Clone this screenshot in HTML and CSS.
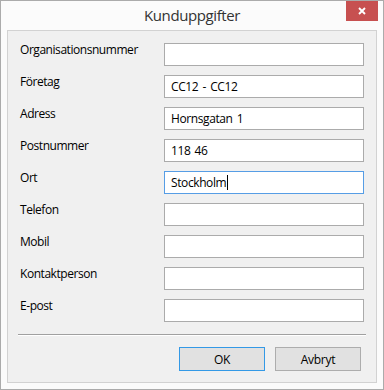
FILE: index.html
```html
<!DOCTYPE html>
<html lang="sv">
<head>
  <meta charset="UTF-8">
  <meta name="viewport" content="width=device-width, initial-scale=1">
  <title>Kunduppgifter</title>
  <link rel="stylesheet" href="styles.css">
</head>
<body>
<div class="window">
  <div class="titlebar">
    <span class="title">Kunduppgifter</span>
    <button class="close" type="button">
      <svg width="8" height="8" viewBox="0 0 8 8"><path d="M1 1 L7 7 M7 1 L1 7" stroke="#fff" stroke-width="1.9" fill="none"/></svg>
    </button>
  </div>

  <div class="client">
    <form class="fields">
      <label>Organisationsnummer</label>
      <input type="text" value="">
      <label>Företag</label>
      <input type="text" value="CC12 - CC12">
      <label>Adress</label>
      <input type="text" value="Hornsgatan 1">
      <label>Postnummer</label>
      <input type="text" value="118 46">
      <label>Ort</label>
      <div class="input focused">Stockholm<span class="caret"></span></div>
      <label>Telefon</label>
      <input type="text" value="">
      <label>Mobil</label>
      <input type="text" value="">
      <label>Kontaktperson</label>
      <input type="text" value="">
      <label>E-post</label>
      <input type="text" value="">
    </form>

    <div class="separator"></div>

    <div class="buttons">
      <button class="btn default" type="button">OK</button>
      <button class="btn" type="button">Avbryt</button>
    </div>
  </div>
</div>
</body>
</html>
```

FILE: styles.css
```css
* { box-sizing: border-box; }
body {
  margin: 0;
  background-color: #fff;
  font-family: 'Open Sans', 'Noto Sans', sans-serif;
  color: #000;
}

.window {
  width: 384px;
  height: 390px;
  border: 1px solid #ababab;
  background-color: #fbfbfb;
  display: flex;
  flex-direction: column;
}

.titlebar {
  position: relative;
  height: 29px;
  display: flex;
  align-items: center;
  justify-content: center;
}

.title {
  font-size: 15px;
  letter-spacing: -0.4px;
  color: #333;
  margin-top: -2px;
}

.close {
  position: absolute;
  top: 0;
  right: 5px;
  width: 32px;
  height: 20px;
  border: none;
  padding: 0;
  background-color: #c75050;
  display: flex;
  align-items: center;
  justify-content: center;
}

.client {
  margin: 0 6px 6px;
  flex: 1;
  border: 1px solid #d2d2d2;
  background-color: #f0f0f0;
  padding-top: 12px;
}

.fields {
  display: grid;
  grid-template-columns: 144px 200px;
  grid-auto-rows: 23px;
  row-gap: 9px;
  padding: 0 11px 0 12px;
  margin: 0;
}

.fields label {
  font-size: 12px;
  line-height: 16px;
  letter-spacing: -0.45px;
  margin-top: -1px;
}

.fields input,
.fields .input {
  height: 23px;
  border: 1px solid #ababab;
  background-color: #fff;
  font-family: inherit;
  font-size: 12px;
  letter-spacing: -0.4px;
  word-spacing: 1.5px;
  padding: 0 6px;
  margin: 0;
  outline: none;
  color: #000;
}

.fields .input {
  display: flex;
  align-items: center;
}

.fields .focused {
  border-color: #569de5;
}

.caret {
  display: inline-block;
  width: 1px;
  height: 15px;
  margin-left: 1px;
  background-color: #000;
}

.separator {
  margin: 12px 10px 0;
  height: 2px;
  border-top: 1px solid #a0a0a0;
  border-bottom: 1px solid #fff;
}

.buttons {
  display: flex;
  justify-content: flex-end;
  gap: 10px;
  padding: 11px 15px 0;
}

.btn {
  width: 86px;
  height: 24px;
  font-family: inherit;
  font-size: 12px;
  letter-spacing: -0.3px;
  color: #000;
  background-color: #e1e1e1;
  border: 1px solid #adadad;
  padding: 0;
}

.btn.default {
  border-color: #3399e6;
}
```
